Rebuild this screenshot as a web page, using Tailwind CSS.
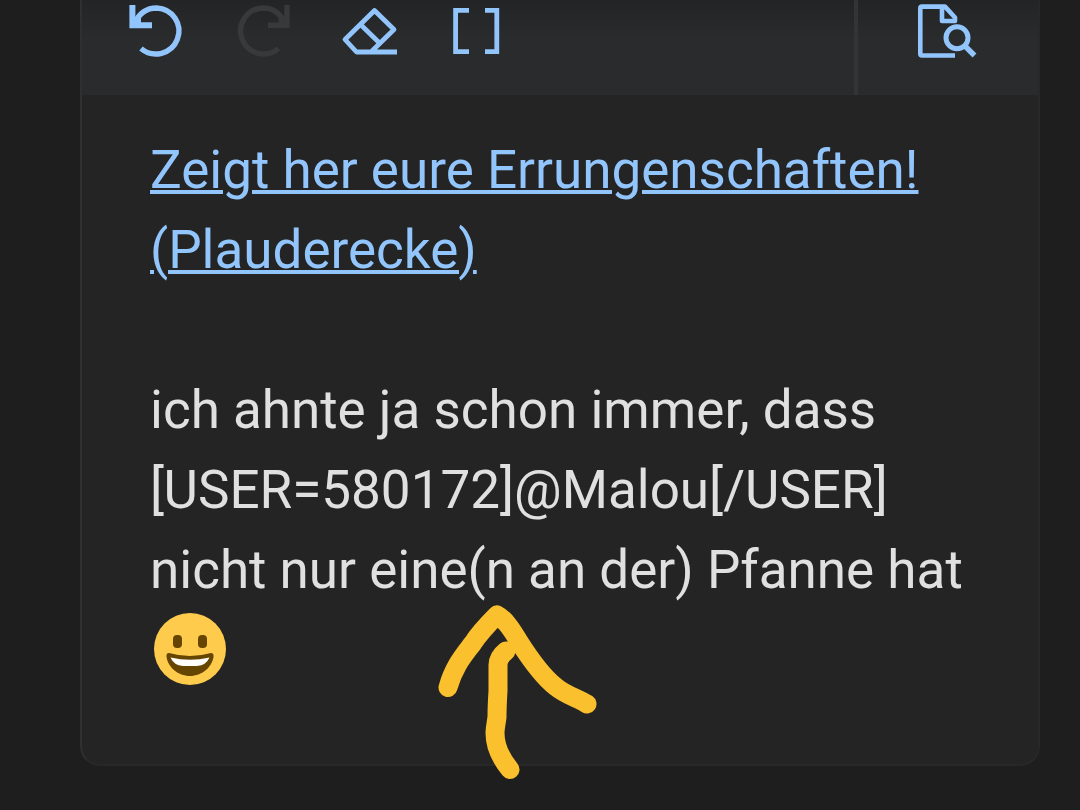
<!DOCTYPE html>
<html lang="de">
<head>
    <meta charset="UTF-8" />
    <meta name="viewport" content="width=device-width, initial-scale=1.0" />
    <title>Antwort schreiben</title>
    <script src="https://cdn.jsdelivr.net/npm/@tailwindcss/browser@4"></script>
</head>
<body class="min-h-screen bg-[#1e1e1e] font-['Roboto','Noto_Sans',sans-serif]">
    <main class="relative pl-20 pr-10">
        <div class="overflow-hidden rounded-b-[20px] border-2 border-t-0 border-[#282828] border-l-[#303030] bg-[#242424]">
            <!-- Toolbar -->
            <div class="flex h-[95px] items-stretch bg-linear-to-b from-[#232425] to-[#292b2c] to-40% pl-5 text-[#93c5fd]">
                <button type="button" aria-label="Rückgängig" class="flex w-27 items-start">
                    <svg class="h-16 w-27" viewBox="0 0 108 64" fill="none" stroke="currentColor" stroke-width="5.4">
                        <path d="M32.5 23.5C37 13.5 45 8 54.7 8A23 23 0 1 1 39 48.5" />
                        <path d="M30.4 5V25.2H50" stroke-width="6" />
                        <path d="M28 27 39 17V27Z" fill="currentColor" stroke="none" />
                    </svg>
                </button>
                <button type="button" aria-label="Wiederholen" class="flex w-27 items-start text-[#37393a]" disabled>
                    <svg class="h-16 w-27" viewBox="0 0 108 64" fill="none" stroke="currentColor" stroke-width="5.4">
                        <path d="M75 23.5C70.5 13.5 62.5 8 52.8 8A23 23 0 1 0 68.5 48.5" />
                        <path d="M77 5V25.2H58" />
                        <path d="M79.5 27 68.5 17V27Z" fill="currentColor" stroke="none" />
                    </svg>
                </button>
                <button type="button" aria-label="Formatierung entfernen" class="flex w-27 items-start">
                    <svg class="h-16 w-27" viewBox="0 0 108 64" fill="none" stroke="currentColor" stroke-width="4.8" stroke-linejoin="round">
                        <path d="M79 52H38.5L27 39.5 56.5 10.5 76 29.5 54 51" />
                        <path d="M42 24 61.500 43" />
                    </svg>
                </button>
                <button type="button" aria-label="BB-Code umschalten" class="flex w-27 items-start">
                    <svg class="h-16 w-27" viewBox="0 0 108 64" fill="none" stroke="currentColor" stroke-width="4.8">
                        <path d="M43 10.3H29.6V51.7H43M59 10.3H70.8V51.7H59" />
                    </svg>
                </button>
                <div class="ml-auto flex w-[184px] justify-center border-l-4 border-[#343434]">
                    <button type="button" aria-label="Vorschau" class="flex w-27 items-start">
                        <svg class="h-16 w-27" viewBox="0 0 108 64" fill="none" stroke="currentColor" stroke-width="4.6">
                            <path d="M61 55.5H28Q26.3 55.5 26.3 53.8V8.3Q26.3 6.6 28 6.6H51L61 17.500V21H48V7" stroke-linejoin="round" />
                            <circle cx="63" cy="37.8" r="11" stroke-width="5" />
                            <path d="M70.5 45.5 80.5 55.5" stroke-width="5.4" />
                        </svg>
                    </button>
                </div>
            </div>

            <!-- Editor content -->
            <div contenteditable="true" spellcheck="false" role="textbox" aria-multiline="true" aria-label="Nachricht" class="pt-[35px] pr-[60px] pb-[74px] pl-[68px] text-[53px] leading-[80px] text-[#e0e0e0] outline-none">
                <p><a href="#" class="text-[#93c5fd] underline decoration-4">Zeigt her eure Errungenschaften! (Plauderecke)</a></p>
                <p><br /></p>
                <p>ich ahnte ja schon immer, dass<br />[USER=580172]@Malou[/USER] nicht nur eine(n an der) Pfanne hat</p>
                <div class="flex h-20 items-center">
                    <svg class="size-20" viewBox="0 0 80 80" role="img" aria-label="Grinsen">
                        <circle cx="40" cy="39" r="36" fill="#ffcb4c" />
                        <rect x="23" y="25" width="9" height="13" rx="4" fill="#664500" />
                        <rect x="48" y="25" width="9" height="13" rx="4" fill="#664500" />
                        <path d="M19 43Q40 49 61 43Q64 43 63.5 47C62 57 52 66 40 66S18 57 16.5 47Q16 43 19 43Z" fill="#664500" />
                        <path d="M20.5 47.5Q40 52 59.5 47.5Q56 55.5 47 56H33Q24 55.5 20.5 47.5Z" fill="#fff" />
                    </svg>
                </div>
            </div>
        </div>

        <!-- Hand-drawn arrow -->
        <svg class="pointer-events-none absolute top-[600px] left-[430px] h-[190px] w-[180px]" viewBox="0 0 180 190" fill="none" stroke="#fbc02d" stroke-width="19" stroke-linecap="round" stroke-linejoin="round">
            <path d="M18 87.5C24 66 34 55 43 43C50 32 59 23 67 15C75 19 82 30 88 40C100 59 113 77 126 87C137 96 148 98 157 104" />
            <path d="M76 51C71 55 68 60 68 65V91C67.5 99 67 106 67 117C66 125 65 128 65 133C65 148 73 161 80 169.5" />
        </svg>
    </main>
</body>
</html>
